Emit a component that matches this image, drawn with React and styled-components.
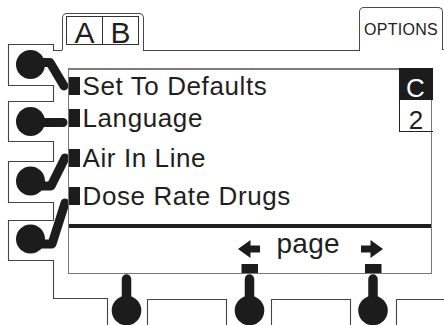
import React from "react";
import styled, { createGlobalStyle } from "styled-components";

const GlobalStyle = createGlobalStyle`
  html, body {
    margin: 0;
    padding: 0;
    background: #fff;
  }
  * {
    box-sizing: border-box;
  }
`;

const Frame = styled.div`
  position: relative;
  width: 444px;
  height: 325px;
  overflow: hidden;
  background: #fff;
  font-family: "Liberation Sans", Arial, sans-serif;
  color: #1f1f1f;
`;

// the device chrome (key outlines, key buttons) is a drawing
const Chrome = styled.svg`
  position: absolute;
  left: 0;
  top: 0;
  width: 444px;
  height: 325px;
`;

const Panel = styled.div`
  position: relative;
  display: grid;
  grid-template-columns: 68px 364px 12px;
  grid-template-rows: 50px 18px 206px 51px;
  height: 325px;
`;

const TopBar = styled.div`
  grid-column: 1 / -1;
  grid-row: 1;
  display: flex;
  align-items: flex-end;
  padding-left: 62px;
  padding-right: 1px;
`;

const Tab = styled.div`
  width: ${(p) => p.$w}px;
  height: ${(p) => p.$h}px;
  border: 1px solid #4a4a4a;
  border-bottom: none;
  border-radius: 5px 5px 0 0;
  background: #fff;
`;

const ModeTab = styled(Tab)`
  padding: 2px 0 0 3px;
`;

const ModeBox = styled.div`
  display: flex;
  width: 73px;
  height: 29px;
  border: 1px solid #333;
`;

const ModeCell = styled.div`
  flex: 1;
  height: 100%;
  padding-top: 2px;
  text-align: center;
  font-size: 30px;
  line-height: 27px;
  & + & {
    border-left: 1px solid #333;
  }
`;

const OptionsTab = styled(Tab)`
  margin-left: auto;
  display: flex;
  align-items: center;
  justify-content: center;
  padding-top: 2px;
  font-size: 16px;
  letter-spacing: 0.3px;
  color: #222;
`;

const Screen = styled.div`
  grid-column: 2;
  grid-row: 3;
  display: flex;
  flex-direction: column;
  border: 1.5px solid #777;
  border-top: none;
`;

const Upper = styled.div`
  display: flex;
  height: 156px;
`;

const MenuList = styled.ul`
  flex: 1;
  margin: 0;
  padding: 0;
  list-style: none;
  border-top: 2.5px solid #7c7c7c;
`;

const MenuItem = styled.li`
  margin-top: ${(p) => p.$space}px;
  height: 30px;
  font-size: 26px;
  line-height: 30px;
  letter-spacing: 0.6px;
  white-space: nowrap;
`;

const Marker = styled.span`
  display: inline-block;
  width: 10.5px;
  height: 18px;
  margin-right: 3px;
  background: #1c1c1c;
  vertical-align: baseline;
`;

const SideCol = styled.div`
  width: 34px;
  margin-right: -1.5px;
  display: flex;
  flex-direction: column;
`;

const Indicator = styled.div`
  height: 32px;
  padding-top: ${(p) => p.$pad}px;
  text-align: center;
  font-size: 26px;
  line-height: 24px;
  color: ${(p) => (p.$active ? "#fff" : "#1f1f1f")};
  background: ${(p) => (p.$active ? "#1c1c1c" : "transparent")};
  border-left: ${(p) => (p.$active ? "none" : "1.5px solid #222")};
  border-bottom: ${(p) => (p.$active ? "none" : "1.5px solid #222")};
`;

const Separator = styled.div`
  height: 4px;
  background: #1f1f1f;
`;

const PageBar = styled.div`
  display: flex;
  align-items: flex-start;
  height: 44.5px;
  padding: 1px 0 0 168.5px;
`;

const ArrowIcon = styled.svg`
  width: 22px;
  height: 18px;
  margin-top: 11px;
  fill: #1c1c1c;
  transform: ${(p) => (p.$flip ? "scaleX(-1)" : "none")};
`;

const PageLabel = styled.span`
  margin: 0 21px 0 17px;
  font-size: 28px;
  line-height: 30px;
  letter-spacing: 0.3px;
`;

const LEFT_KEYS = [
  { cy: 64.5, bar: "M30 62.5 L50 62.5 L64 86" },
  { cy: 121.5, bar: "M30 122.5 L63 122.5" },
  { cy: 181, bar: "M30 186 L51 186 L65 158" },
  { cy: 239, bar: "M30 244 L52 244 L65 203" },
];

const BOTTOM_KEYS = [
  { cx: 126.5, marker: false },
  { cx: 249.5, marker: true },
  { cx: 373, marker: true },
];

const MENU = [
  { label: "Set To Defaults", space: 0.5 },
  { label: "Language", space: 2 },
  { label: "Air In Line", space: 10 },
  { label: "Dose Rate Drugs", space: 8 },
];

const PageArrow = ({ dir }) => (
  <ArrowIcon viewBox="0 0 22 18" $flip={dir === "right"}>
    <path d="M0 9 L12.5 0 V5.5 H22 V12.5 H12.5 V18 Z" />
  </ArrowIcon>
);

const DeviceChrome = () => (
  <Chrome viewBox="0 0 444 325">
    <g fill="none" stroke="#444" strokeWidth="1.1">
      <path d="M62 50.5 H53.5 V44.5 H8.5 V85.5 H53.5 V101.5 H8.5 V141.5 H53.5 V161.5 H8.5 V202.5 H53.5 V220.5 H8.5 V260.5 H53.5 V298.5 H107.5 V325" />
      <path d="M143 50.5 H360" />
      <path d="M442 49.5 H444" />
      <path d="M147.5 325 V299.5 H226.5 V325" />
      <path d="M271.5 325 V299.5 H350.5 V325" />
      <path d="M396.5 325 V299.5 H444" />
    </g>
    <g fill="#1c1c1c" stroke="#1c1c1c" strokeLinecap="round" strokeLinejoin="round">
      {LEFT_KEYS.map((k) => (
        <g key={k.cy}>
          <circle cx="30.5" cy={k.cy} r="14.5" stroke="none" />
          <path d={k.bar} fill="none" strokeWidth="9" />
        </g>
      ))}
      {BOTTOM_KEYS.map((k) => (
        <g key={k.cx}>
          <circle cx={k.cx} cy="310.5" r="14.8" stroke="none" />
          <path d={`M${k.cx} 310 V279`} fill="none" strokeWidth="9.5" />
          {k.marker && (
            <rect x={k.cx - 8} y="264" width="16.5" height="9" stroke="none" />
          )}
        </g>
      ))}
    </g>
  </Chrome>
);

export default function App() {
  return (
    <>
      <GlobalStyle />
      <Frame>
        <DeviceChrome />
        <Panel>
          <TopBar>
            <ModeTab $w={82} $h={37}>
              <ModeBox>
                <ModeCell>A</ModeCell>
                <ModeCell>B</ModeCell>
              </ModeBox>
            </ModeTab>
            <OptionsTab $w={84} $h={43}>OPTIONS</OptionsTab>
          </TopBar>
          <Screen>
            <Upper>
              <MenuList>
                {MENU.map((item) => (
                  <MenuItem key={item.label} $space={item.space}>
                    <Marker />
                    {item.label}
                  </MenuItem>
                ))}
              </MenuList>
              <SideCol>
                <Indicator $active $pad={8}>C</Indicator>
                <Indicator $pad={8}>2</Indicator>
              </SideCol>
            </Upper>
            <Separator />
            <PageBar>
              <PageArrow dir="left" />
              <PageLabel>page</PageLabel>
              <PageArrow dir="right" />
            </PageBar>
          </Screen>
        </Panel>
      </Frame>
    </>
  );
}
